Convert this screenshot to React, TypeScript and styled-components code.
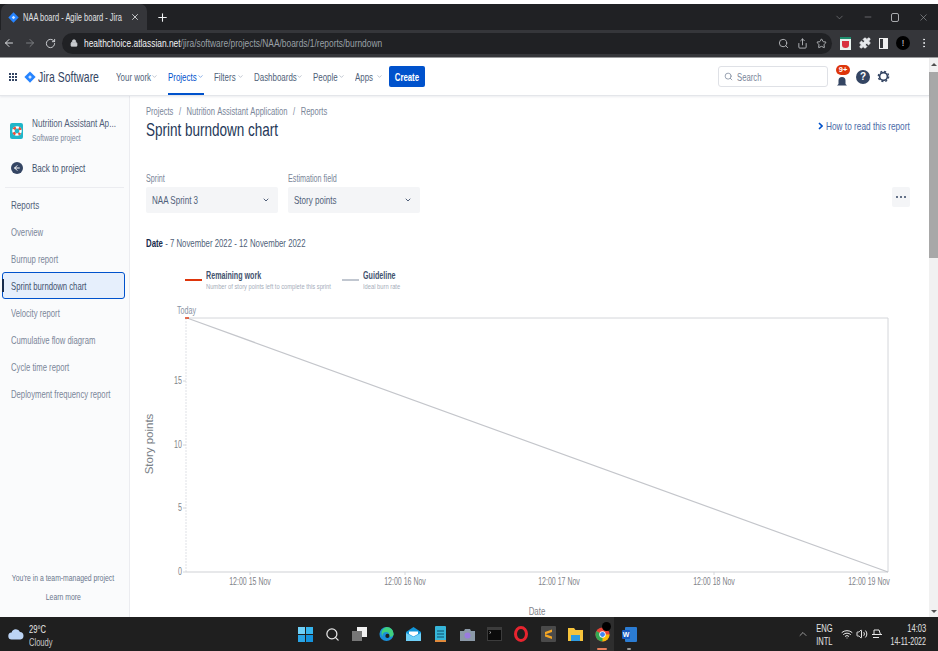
import React from "react";
import styled, { createGlobalStyle } from "styled-components";
import { ArrowLeft, ArrowRight, RotateCw, Lock, Search, Share, Star, Puzzle, MoreVertical, ChevronDown, ChevronUp, X, Plus, Minus, Wifi, Volume2 } from "lucide-react";

const Global = createGlobalStyle`
  html, body { margin: 0; padding: 0; background: #fff; }
  body { width: 938px; height: 651px; overflow: hidden; font-family: "Liberation Sans", Arial, sans-serif; color: #42526e; }
  * { box-sizing: border-box; }
`;

/* The reference's text is set in a condensed face: squeeze real text horizontally. */
const Tx = styled.span<{ $s?: number; $o?: string }>`
  display: inline-block;
  white-space: nowrap;
  transform: scaleX(${p => p.$s ?? 0.72});
  transform-origin: ${p => p.$o ?? "left"} center;
`;

const Page = styled.div`
  width: 938px; height: 651px; display: flex; flex-direction: column; padding-top: 4px; background: #fff; overflow: hidden;
`;
const TabStrip = styled.div`
  height: 26px; flex: none; background: #202124; display: flex; align-items: flex-end; padding-left: 1px; color: #e8eaed;
`;
const Tab = styled.div`
  width: 146px; height: 26px; background: #35363a; border-radius: 7px 7px 0 0; display: flex; align-items: center; padding: 0 7px 0 7px; gap: 4px; font-size: 11.5px; color: #e0e2e5;
`;
const TabTitle = styled.div` flex: 1; min-width: 0; `;
const NewTab = styled.div` width: 30px; height: 26px; display: flex; align-items: center; justify-content: center; color: #f1f3f4; `;
const Spacer = styled.div` flex: 1; `;
const WinButtons = styled.div` display: flex; align-items: center; gap: 18px; padding-right: 9px; height: 26px; color: #a9abae; `;
const AddressBar = styled.div`
  height: 28px; flex: none; background: #35363a; display: flex; align-items: center; padding: 0 5px 1px 3px; color: #d7d9dc; border-bottom: 1px solid #9a9b9d;
`;
const NavIcons = styled.div` display: flex; align-items: center; gap: 9px; width: 59px; padding-left: 0; `;
const UrlPill = styled.div`
  width: 770px; flex: none; height: 21px; border-radius: 11px; background: #202124; display: flex; align-items: center; padding: 0 5px 0 8px; font-size: 11.5px; color: #9aa0a6; gap: 6px;
`;
const Host = styled.span` color: #f1f3f4; `;
const UrlText = styled.div` flex: 1; min-width: 0; `;
const PillIcons = styled.div` display: flex; gap: 8px; align-items: center; flex: none; color: #b8babd; `;
const Exts = styled.div` display: flex; align-items: center; gap: 8px; padding: 0 0 0 8px; color: #e8eaed; `;
const ExtBadge = styled.div` width: 11px; height: 13px; background: #e8f2ee; border-top: 2px solid #1e8e6e; display: flex; align-items: center; justify-content: center; `;
const PanelIcon = styled.div` width: 9px; height: 11px; border: 1.5px solid #f0f0f0; border-right-width: 5px; `;
const Avatar = styled.div` width: 14px; height: 14px; border-radius: 50%; background: #000; color: #ddd; font-size: 9px; display: flex; align-items: center; justify-content: center; `;

const Workspace = styled.div` flex: 1; min-height: 0; display: flex; `;
const WorkColumn = styled.div` flex: 1; min-width: 0; display: flex; flex-direction: column; `;

const TopNav = styled.div`
  height: 38px; flex: none; display: flex; align-items: center; padding-left: 9px; background: #fff; border-bottom: 1px solid #e4e6ea; box-shadow: 0 1px 2px rgba(9,30,66,.08); position: relative; z-index: 1;
`;
const Grid = styled.div` display: grid; grid-template-columns: repeat(3, 2px); gap: 1px; margin-right: 7px; width: 8px; `;
const Dot = styled.i` width: 2px; height: 2px; background: #344563; display: block; `;
const Brand = styled.div` font-size: 14.5px; color: #344563; margin-left: 2px; width: 78px; flex: none; `;
const NavItems = styled.div` display: flex; height: 100%; gap: 10px; `;
const NavItem = styled.div<{ $active?: boolean; $w: number }>`
  width: ${p => p.$w}px; flex: none; display: flex; align-items: center; justify-content: space-between; font-size: 11.5px; color: ${p => p.$active ? "#0052cc" : "#505f79"}; border-bottom: 2px solid ${p => p.$active ? "#0052cc" : "transparent"}; padding-top: 2px; height: 100%; min-width: 0;
`;
const NavLabel = styled.div` width: 0; flex: 1; `;
const CreateBtn = styled.button`
  width: 36px; height: 21px; background: #0052cc; color: #fff; border: 0; border-radius: 2px; margin-left: 6px; font: inherit; font-size: 11.5px; font-weight: 700; padding: 0; display: flex; align-items: center; justify-content: center; flex: none;
`;
const SearchBox = styled.div`
  margin-left: auto; width: 110px; height: 21px; border: 1px solid #dfe1e6; border-radius: 3px; display: flex; align-items: center; gap: 4px; padding: 0 5px; font-size: 11.5px; color: #7a869a; margin-right: 8px; flex: none;
`;
const Bell = styled.div` position: relative; width: 15px; height: 22px; margin-right: 5px; flex: none; display: flex; align-items: flex-end; `;
const Badge = styled.span`
  position: absolute; top: -1px; left: 0; width: 14px; height: 10px; border-radius: 5px; background: #de350b; color: #fff; font-size: 7.5px; font-weight: 700; display: flex; align-items: center; justify-content: center;
`;
const HelpIcon = styled.div` width: 14px; height: 14px; border-radius: 50%; background: #344563; color: #fff; font-size: 10px; font-weight: 700; display: flex; align-items: center; justify-content: center; margin-right: 7px; flex: none; `;
const NavEnd = styled.div` width: 52px; flex: none; display: flex; `;

const Body = styled.div` flex: 1; min-height: 0; display: flex; `;
const Sidebar = styled.aside`
  width: 130px; flex: none; background: #fafbfc; border-right: 1px solid #ebecf0; display: flex; flex-direction: column; padding-top: 21px; color: #42526e;
`;
const ProjectRow = styled.div` display: flex; align-items: center; gap: 9px; padding-left: 10px; `;
const ProjectIcon = styled.div`
  width: 13px; height: 16px; background: #1fb6c9; border-radius: 2px; display: flex; align-items: center; justify-content: center; flex: none;
`;
const ProjectName = styled.div` font-size: 11.5px; color: #505f79; line-height: 13px; `;
const ProjectSub = styled.div` font-size: 9.5px; color: #7a869a; line-height: 13px; margin-top: 1px; `;
const BackRow = styled.div` display: flex; align-items: center; gap: 9px; padding-left: 11px; margin-top: 14px; font-size: 11.5px; height: 20px; `;
const BackCircle = styled.div` width: 12px; height: 12px; border-radius: 50%; background: #344563; color: #fff; display: flex; align-items: center; justify-content: center; flex: none; `;
const Divider = styled.div` height: 1px; background: #ebecf0; margin: 9px 5px 0; `;
const SideHeading = styled.div` font-size: 11.5px; color: #505f79; padding-left: 11px; height: 27px; display: flex; align-items: center; margin-top: 3px; `;
const SideItem = styled.div<{ $active?: boolean }>`
  height: 27px; margin: 0 4px 0 2px; padding-left: 8px; display: flex; align-items: center; font-size: 11.5px; color: #7a8699; position: relative; border: 1px solid transparent;
  ${p => p.$active ? `background: #e6effc; border-color: #0052cc; border-radius: 3px; color: #42526e;
    &::before { content: ""; position: absolute; left: -1px; top: 6px; bottom: 6px; width: 2px; background: #172b4d; }` : ""}
`;
const SideFoot = styled.div` margin-top: auto; display: flex; flex-direction: column; align-items: center; font-size: 9.5px; color: #6b778c; padding: 0 3px 14px 0; line-height: 13px; gap: 6px; `;

const Content = styled.main` flex: 1; min-width: 0; padding: 9px 0 0 16px; display: flex; flex-direction: column; overflow: hidden; `;
const Crumbs = styled.div` font-size: 11.5px; color: #7a8699; line-height: 13px; word-spacing: 1px; `;
const TitleRow = styled.div` display: flex; align-items: center; justify-content: space-between; padding-right: 18px; margin-top: 1px; `;
const Title = styled.h1` margin: 0; font-size: 18.5px; font-weight: 400; color: #253858; line-height: 22px; `;
const HowTo = styled.div` width: 93px; flex: none; font-size: 11.5px; color: #4a6aa8; display: flex; align-items: center; gap: 3px; margin-top: -8px; `;
const HowToText = styled.div` flex: 1; min-width: 0; `;
const HowToChevron = styled.svg` flex: none; `;
const Filters = styled.div` display: flex; align-items: flex-end; margin-top: 32px; gap: 10px; padding-right: 19px; `;
const Field = styled.div` width: 132px; flex: none; `;
const FieldLabel = styled.div` font-size: 10px; color: #7a8699; line-height: 12px; margin-bottom: 2px; `;
const SelectBox = styled.div` height: 26px; background: #f4f5f7; border-radius: 2px; display: flex; align-items: center; justify-content: space-between; padding: 0 8px 0 6px; font-size: 11.5px; color: #505f79; `;
const SelectLabel = styled.div` width: 0; flex: 1; `;
const MoreBtn = styled.div` margin-left: auto; width: 18px; height: 20px; margin-bottom: 6px; background: #f4f5f7; border-radius: 2px; display: flex; align-items: center; justify-content: center; gap: 1.5px; `;
const MoreDot = styled.i` width: 2.5px; height: 2.5px; border-radius: 50%; background: #344563; display: block; `;
const DateLine = styled.div` font-size: 11.5px; color: #505f79; margin-top: 24px; line-height: 13px; b { color: #172b4d; } `;
const Legend = styled.div` display: flex; margin: 19px 0 0 39px; `;
const LegendItem = styled.div<{ $w: number }>` display: flex; gap: 4px; width: ${p => p.$w}px; flex: none; `;
const Swatch = styled.div<{ $c: string }>` width: 17px; height: 2px; background: ${p => p.$c}; margin-top: 10px; flex: none; `;
const LegendName = styled.div` font-size: 10.5px; color: #42526e; font-weight: 700; line-height: 13px; `;
const LegendSub = styled.div` font-size: 8px; color: #a5adba; line-height: 10px; `;
const ChartSvg = styled.svg` display: block; flex: none; margin-left: -16px; `;

const Scrollbar = styled.div` width: 9px; flex: none; background: #f1f1f1; display: flex; flex-direction: column; align-items: center; `;
const ScrollUp = styled.div` width: 0; height: 0; border: 3px solid transparent; border-top: 0; border-bottom: 3px solid #505050; margin: 5px 0 6px; flex: none; `;
const Thumb = styled.div` width: 9px; height: 186px; background: #a8a8a8; flex: none; `;
const ScrollDown = styled.div` width: 0; height: 0; border: 3px solid transparent; border-bottom: 0; border-top: 3px solid #505050; margin: auto 0 4px; flex: none; `;

const Taskbar = styled.footer` height: 34px; flex: none; background: #1f1f1f; display: flex; align-items: center; color: #e8e8e8; `;
const Weather = styled.div` display: flex; align-items: center; gap: 5px; padding: 0 0 0 8px; width: 297px; flex: none; font-size: 10.5px; line-height: 13px; `;
const WeatherText = styled.div` padding-top: 3px; `;
const WeatherSub = styled.div` color: #c9c9c9; `;
const TaskIcons = styled.div` display: flex; align-items: center; gap: 11px; height: 100%; `;
const TaskSlot = styled.div<{ $active?: boolean }>` width: 16px; height: 100%; display: flex; align-items: center; justify-content: center; position: relative; flex: none; ${p => p.$active ? `background:#2e2e2e; width:24px; margin:0 -4px;` : ""} `;
const Underline = styled.span<{ $c: string; $w: number }>` position: absolute; bottom: 1px; left: 50%; margin-left: ${p => -p.$w / 2}px; height: 2px; width: ${p => p.$w}px; background: ${p => p.$c}; border-radius: 1px; `;
const ChromeBadge = styled.span` position: absolute; top: 5px; right: 3px; width: 9px; height: 9px; border-radius: 50%; background: #000; `;
const Tray = styled.div` margin-left: auto; display: flex; align-items: center; padding-right: 12px; `;
const TrayChevron = styled.div` width: 12px; display: flex; margin-right: 7px; `;
const Lang = styled.div` width: 16px; font-size: 10.5px; line-height: 13px; color: #e4e4e4; margin-right: 9px; padding-top: 2px; display: flex; flex-direction: column; align-items: center; `;
const Clock = styled.div` width: 36px; margin-left: 7px; font-size: 10.5px; line-height: 13px; color: #e4e4e4; padding-top: 2px; display: flex; flex-direction: column; align-items: flex-end; `;
const TrayIcons = styled.div` display: flex; align-items: center; gap: 3px; `;

const JiraDiamond = ({ size = 12 }: { size?: number }) => (
  <svg width={size} height={size} viewBox="0 0 16 16"><path d="M8 .5 15.5 8 8 15.5.5 8Z" fill="#2684ff" /><path d="M8 5.5 10.5 8 8 10.5 5.5 8Z" fill="#fff" opacity=".8" /></svg>
);

const sideItems = ["Overview", "Burnup report", "Sprint burndown chart", "Velocity report", "Cumulative flow diagram", "Cycle time report", "Deployment frequency report"];
const navItems: [string, number][] = [["Your work", 42], ["Projects", 36], ["Filters", 30], ["Dashboards", 49], ["People", 32], ["Apps", 28]];

const AxisText = ({ x, y, s, anchor, size = 11, fill = "#7f8389", children }: { x: number; y: number; s: number; anchor?: "end" | "middle"; size?: number; fill?: string; children: React.ReactNode }) => (
  <text transform={`translate(${x} ${y}) scale(${s} 1)`} fontSize={size} textAnchor={anchor} fill={fill}>{children}</text>
);

const Chart = () => {
  const xs = [["12:00 15 Nov", 250], ["12:00 16 Nov", 405], ["12:00 17 Nov", 559], ["12:00 18 Nov", 714], ["12:00 19 Nov", 869]] as const;
  const ys = [["15", 381], ["10", 445], ["5", 508], ["0", 572]] as const;
  const ox = 130, oy = 292;
  return (
    <ChartSvg width={799} height={325} viewBox={`${ox} ${oy} 799 325`} fontFamily='"Liberation Sans", Arial, sans-serif'>
      <AxisText x={177} y={314} s={0.68} size={10.5} fill="#8993a4">Today</AxisText>
      <path d="M186 318H888V572" fill="none" stroke="#d4d6da" />
      <path d="M186 318V572" stroke="#dfe1e6" strokeDasharray="2 1" />
      <path d="M186 572H888" stroke="#cfd1d5" />
      <path d="M187 318 888 572" stroke="#c4c6cb" strokeWidth="1.2" fill="none" />
      <path d="M185 318h4" stroke="#de350b" strokeWidth="1.4" />
      {ys.map(([l, y]) => (
        <g key={l}>
          <path d={`M183 ${y}h3`} stroke="#d4d6da" />
          <AxisText x={182} y={y + 3} s={0.62} anchor="end" size={11.5}>{l}</AxisText>
        </g>
      ))}
      {xs.map(([l, x]) => (
        <g key={l}>
          <path d={`M${x} 572v3`} stroke="#d4d6da" />
          <AxisText x={x} y={585} s={0.61} anchor="middle" size={11.5}>{l}</AxisText>
        </g>
      ))}
      <AxisText x={537} y={615} s={0.72} anchor="middle">Date</AxisText>
      <text transform="translate(153 444) rotate(-90)" fontSize="11.5" textAnchor="middle" fill="#7a7f87">Story points</text>
    </ChartSvg>
  );
};

const Gear = () => (
  <svg width="13" height="13" viewBox="0 0 14 14"><circle cx="7" cy="7" r="4.2" fill="none" stroke="#344563" strokeWidth="1.8" /><circle cx="7" cy="7" r="5.6" fill="none" stroke="#344563" strokeWidth="1.4" strokeDasharray="2.2 2.2" /></svg>
);
const WinLogo = () => (
  <svg width="15" height="15" viewBox="0 0 15 15"><path d="M0 0h7v7H0z" fill="#6fd0f7" /><path d="M8 0h7v7H8z" fill="#35b5ee" /><path d="M0 8h7v7H0z" fill="#2aa5e6" /><path d="M8 8h7v7H8z" fill="#1493dd" /></svg>
);
const Edge = () => (
  <svg width="15" height="16" viewBox="0 0 16 16"><circle cx="8" cy="8" r="7.5" fill="#1a8fd8" /><path d="M8 .5A7.5 7.5 0 0 1 15.5 9c-1 2-4 2.5-5.5 1.5 2-1 1.5-4-1.5-4.5C5 5.5 3 8 4 11 1.5 8 2.5 2 8 .5Z" fill="#40d07f" /><circle cx="9" cy="10" r="2.2" fill="#1f1f1f" /></svg>
);
const Mail = () => (
  <svg width="15" height="14" viewBox="0 0 15 14"><path d="M7.5 0 15 5v9H0V5Z" fill="#1295d8" /><path d="M0 6l7.5 4L15 6v8H0Z" fill="#6fd0f7" /><path d="M3 4.5h9V7L7.5 9.5 3 7Z" fill="#fff" /></svg>
);
const Notepad = () => (
  <svg width="11" height="16" viewBox="0 0 11 16"><rect width="11" height="16" rx="1" fill="#36b5d8" /><path d="M2 5h7M2 8h7M2 11h7" stroke="#0b4f6c" /><rect y="14" width="11" height="2" fill="#e08a3c" /></svg>
);
const Camera = () => (
  <svg width="15" height="13" viewBox="0 0 15 13"><path d="M0 3h4l1-2h5l1 2h4v10H0Z" fill="#8b99a8" /><circle cx="7.5" cy="7.5" r="3" fill="#9a7be0" /></svg>
);
const Terminal = () => (
  <svg width="15" height="14" viewBox="0 0 15 14"><rect width="15" height="14" fill="#3c3c3c" /><rect x="1" y="3" width="13" height="10" fill="#0b0b0b" /><path d="M2.5 4.5 4 5.5 2.5 6.5" stroke="#ddd" strokeWidth=".6" fill="none" /></svg>
);
const Opera = () => (
  <svg width="14" height="16" viewBox="0 0 14 16"><ellipse cx="7" cy="8" rx="5.5" ry="6.5" fill="none" stroke="#e8242f" strokeWidth="3" /></svg>
);
const Sublime = () => (
  <svg width="15" height="16" viewBox="0 0 15 16"><rect width="15" height="16" rx="1" fill="#4a4a4a" /><path d="M4 6 11 3.5V6L4 8.5ZM4 8 11 10.5V13L4 10.5Z" fill="#f5a623" /></svg>
);
const Folder = () => (
  <svg width="15" height="14" viewBox="0 0 15 14"><path d="M0 1h6l1.5 2H15v11H0Z" fill="#f6c33b" /><path d="M3 8h9v6H3z" fill="#2f9be0" /></svg>
);
const Chrome = () => (
  <svg width="15" height="15" viewBox="0 0 16 16"><circle cx="8" cy="8" r="7.5" fill="#ea4335" /><path d="M8 8 1.5 4.3A7.5 7.5 0 0 0 8 15.5L11.7 9Z" fill="#34a853" /><path d="M8 8h7.5A7.5 7.5 0 0 1 8 15.5Z" fill="#fbbc05" /><circle cx="8" cy="8" r="3.4" fill="#fff" /><circle cx="8" cy="8" r="2.6" fill="#4285f4" /></svg>
);
const Word = () => (
  <svg width="15" height="15" viewBox="0 0 15 15"><rect x="3" width="12" height="15" rx="1" fill="#2b7cd3" /><rect y="3" width="8" height="9" rx="1" fill="#185abd" /><text x="4" y="10" fontSize="7" fontWeight="700" fill="#fff" textAnchor="middle" fontFamily="Liberation Sans, sans-serif">W</text></svg>
);
const Cloud = () => (
  <svg width="16" height="12" viewBox="0 0 16 12"><path d="M4 11.5A3.5 3.5 0 0 1 3.6 4.5 4.5 4.5 0 0 1 12 4a3.8 3.8 0 0 1 .5 7.5Z" fill="#bcd4f5" /></svg>
);
const BellIcon = () => (
  <svg width="12" height="12" viewBox="0 0 12 12"><path d="M6 1a3.5 3.5 0 0 1 3.5 3.5V8L11 9.5H1L2.5 8V4.5A3.5 3.5 0 0 1 6 1Z" fill="#344563" /></svg>
);
const Lifebuoy = () => (
  <svg width="12" height="12" viewBox="0 0 12 12">
    <circle cx="6" cy="6" r="3.6" fill="none" stroke="#fff" strokeWidth="2.4" />
    <circle cx="6" cy="6" r="3.6" fill="none" stroke="#e8503a" strokeWidth="2.4" strokeDasharray="2.83 2.83" strokeDashoffset="1.41" transform="rotate(45 6 6)" />
  </svg>
);

export default function App() {
  return (
    <>
      <Global />
      <Page>
        <TabStrip>
          <Tab>
            <JiraDiamond size={11} />
            <TabTitle><Tx $s={0.65}>NAA board - Agile board - Jira</Tx></TabTitle>
            <X size={10} strokeWidth={2} />
          </Tab>
          <NewTab><Plus size={13} strokeWidth={2} /></NewTab>
          <Spacer />
          <WinButtons>
            <ChevronDown size={11} strokeWidth={1} />
            <Minus size={10} strokeWidth={1.2} />
            <svg width="9" height="10" viewBox="0 0 9 10"><rect x=".5" y="1.5" width="7" height="8" rx="1.5" fill="none" stroke="#a9abae" /></svg>
            <X size={11} strokeWidth={1.2} />
          </WinButtons>
        </TabStrip>
        <AddressBar>
          <NavIcons>
            <ArrowLeft size={12} />
            <ArrowRight size={12} color="#7b7d80" />
            <RotateCw size={11} />
          </NavIcons>
          <UrlPill>
            <Lock size={8} color="#c9cbcf" fill="#c9cbcf" />
            <UrlText><Tx $s={0.73}><Host>healthchoice.atlassian.net</Host>/jira/software/projects/NAA/boards/1/reports/burndown</Tx></UrlText>
            <PillIcons>
              <Search size={11} />
              <Share size={11} />
              <Star size={11} />
            </PillIcons>
          </UrlPill>
          <Exts>
            <ExtBadge><svg width="7" height="7" viewBox="0 0 7 7"><path d="M0 0h7v4a3.5 3 0 0 1-7 0Z" fill="#d8323e" /></svg></ExtBadge>
            <Puzzle size={12} fill="#e8eaed" />
            <PanelIcon />
            <Avatar>!</Avatar>
            <MoreVertical size={12} />
          </Exts>
        </AddressBar>
        <Workspace>
          <WorkColumn>
            <TopNav>
              <Grid>{Array.from({ length: 9 }).map((_, i) => <Dot key={i} />)}</Grid>
              <JiraDiamond size={12} />
              <Brand><Tx $s={0.72}>Jira Software</Tx></Brand>
              <NavItems>
                {navItems.map(([n, w]) => (
                  <NavItem key={n} $w={w} $active={n === "Projects"}>
                    <NavLabel><Tx $s={0.69}>{n}</Tx></NavLabel>
                    <ChevronDown size={7} strokeWidth={1.5} color={n === "Projects" ? "#0052cc" : "#7a869a"} />
                  </NavItem>
                ))}
              </NavItems>
              <CreateBtn><Tx $s={0.68} $o="center">Create</Tx></CreateBtn>
              <SearchBox><Search size={9} /><Tx $s={0.67}>Search</Tx></SearchBox>
              <Bell><BellIcon /><Badge>9+</Badge></Bell>
              <HelpIcon>?</HelpIcon>
              <NavEnd><Gear /></NavEnd>
            </TopNav>
            <Body>
              <Sidebar>
                <ProjectRow>
                  <ProjectIcon><Lifebuoy /></ProjectIcon>
                  <div>
                    <ProjectName><Tx $s={0.71}>Nutrition Assistant Ap...</Tx></ProjectName>
                    <ProjectSub><Tx $s={0.71}>Software project</Tx></ProjectSub>
                  </div>
                </ProjectRow>
                <BackRow><BackCircle><ArrowLeft size={8} strokeWidth={3} /></BackCircle><Tx $s={0.7}>Back to project</Tx></BackRow>
                <Divider />
                <SideHeading><Tx $s={0.7}>Reports</Tx></SideHeading>
                {sideItems.map(s => <SideItem key={s} $active={s === "Sprint burndown chart"}><Tx $s={0.67}>{s}</Tx></SideItem>)}
                <SideFoot>
                  <Tx $s={0.72} $o="center">You're in a team-managed project</Tx>
                  <Tx $s={0.72} $o="center">Learn more</Tx>
                </SideFoot>
              </Sidebar>
              <Content>
                <Crumbs><Tx $s={0.66}>Projects &nbsp;/&nbsp; Nutrition Assistant Application &nbsp;/&nbsp; Reports</Tx></Crumbs>
                <TitleRow>
                  <Title><Tx $s={0.73}>Sprint burndown chart</Tx></Title>
                  <HowTo>
                    <HowToChevron width="5" height="8" viewBox="0 0 5 8"><path d="M1 1l3 3-3 3" fill="none" stroke="#0052cc" strokeWidth="1.6" /></HowToChevron>
                    <HowToText><Tx $s={0.72}>How to read this report</Tx></HowToText>
                  </HowTo>
                </TitleRow>
                <Filters>
                  <Field>
                    <FieldLabel><Tx $s={0.72}>Sprint</Tx></FieldLabel>
                    <SelectBox><SelectLabel><Tx $s={0.7}>NAA Sprint 3</Tx></SelectLabel><ChevronDown size={8} strokeWidth={3} /></SelectBox>
                  </Field>
                  <Field>
                    <FieldLabel><Tx $s={0.72}>Estimation field</Tx></FieldLabel>
                    <SelectBox><SelectLabel><Tx $s={0.7}>Story points</Tx></SelectLabel><ChevronDown size={8} strokeWidth={3} /></SelectBox>
                  </Field>
                  <MoreBtn><MoreDot /><MoreDot /><MoreDot /></MoreBtn>
                </Filters>
                <DateLine><Tx $s={0.68}><b>Date</b> - 7 November 2022 - 12 November 2022</Tx></DateLine>
                <Legend>
                  <LegendItem $w={157}>
                    <Swatch $c="#de350b" />
                    <div><LegendName><Tx $s={0.68}>Remaining work</Tx></LegendName><LegendSub><Tx $s={0.72}>Number of story points left to complete this sprint</Tx></LegendSub></div>
                  </LegendItem>
                  <LegendItem $w={60}>
                    <Swatch $c="#c1c7d0" />
                    <div><LegendName><Tx $s={0.68}>Guideline</Tx></LegendName><LegendSub><Tx $s={0.72}>Ideal burn rate</Tx></LegendSub></div>
                  </LegendItem>
                </Legend>
                <Chart />
              </Content>
            </Body>
          </WorkColumn>
          <Scrollbar>
            <ScrollUp />
            <Thumb />
            <ScrollDown />
          </Scrollbar>
        </Workspace>
        <Taskbar>
          <Weather>
            <Cloud />
            <WeatherText><Tx $s={0.72}>29°C</Tx><WeatherSub><Tx $s={0.72}>Cloudy</Tx></WeatherSub></WeatherText>
          </Weather>
          <TaskIcons>
            <TaskSlot><WinLogo /></TaskSlot>
            <TaskSlot><Search size={15} color="#e6e6e6" strokeWidth={2} /></TaskSlot>
            <TaskSlot><svg width="15" height="14" viewBox="0 0 15 14"><rect x="5" width="10" height="10" fill="#f1f1f1" /><rect y="4" width="10" height="10" fill="#777" /></svg></TaskSlot>
            <TaskSlot><Edge /></TaskSlot>
            <TaskSlot><Mail /></TaskSlot>
            <TaskSlot><Notepad /></TaskSlot>
            <TaskSlot><Camera /></TaskSlot>
            <TaskSlot><Terminal /></TaskSlot>
            <TaskSlot><Opera /></TaskSlot>
            <TaskSlot><Sublime /></TaskSlot>
            <TaskSlot><Folder /></TaskSlot>
            <TaskSlot $active><Chrome /><ChromeBadge /><Underline $c="#e8805c" $w={10} /></TaskSlot>
            <TaskSlot><Word /><Underline $c="#999" $w={4} /></TaskSlot>
          </TaskIcons>
          <Tray>
            <TrayChevron><ChevronUp size={12} strokeWidth={1.2} /></TrayChevron>
            <Lang><Tx $s={0.72} $o="center">ENG</Tx><Tx $s={0.72} $o="center">INTL</Tx></Lang>
            <TrayIcons>
              <Wifi size={12} />
              <Volume2 size={12} />
              <svg width="12" height="12" viewBox="0 0 12 12"><path d="M1 6.5h10M3 6.5V2h5l1.5 4.5M2 9.5h6" stroke="#e8e8e8" fill="none" /></svg>
            </TrayIcons>
            <Clock><Tx $s={0.72} $o="right">14:03</Tx><Tx $s={0.67} $o="right">14-11-2022</Tx></Clock>
          </Tray>
        </Taskbar>
      </Page>
    </>
  );
}
